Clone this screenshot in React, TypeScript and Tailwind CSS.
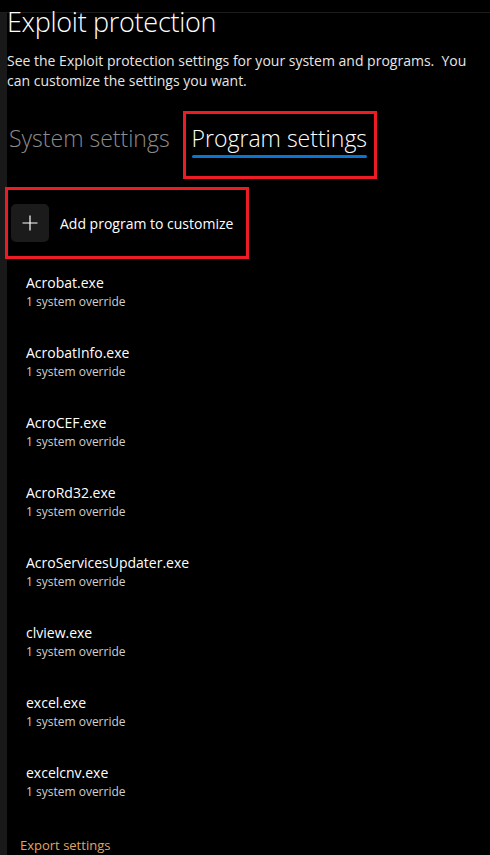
const programs = [
  "Acrobat.exe",
  "AcrobatInfo.exe",
  "AcroCEF.exe",
  "AcroRd32.exe",
  "AcroServicesUpdater.exe",
  "clview.exe",
  "excel.exe",
  "excelcnv.exe",
];

function PlusIcon() {
  return (
    <svg width="16" height="16" viewBox="0 0 16 16" fill="none" stroke="#ffffff" strokeWidth="1.2">
      <path d="M8 0.5v15M0.5 8h15" />
    </svg>
  );
}

export default function App() {
  return (
    <div
      className="h-[855px] w-[490px] overflow-hidden bg-black text-white"
      style={{ fontFamily: '"Segoe UI", "Open Sans", sans-serif' }}
    >
      <div className="h-[12px] bg-black" />
      <div className="flex h-[843px] border-t border-[#1c1c1c]">
        <div className="w-[7px] shrink-0 bg-[#191919]" />
        <div className="flex-1">
          <h1 className="-mt-[9px] text-[27px] leading-[36px] font-light tracking-[-0.3px] text-white">
            Exploit protection
          </h1>
          <p className="mt-[11px] text-[14px] leading-[20px] text-[#e6e6e6]">
            See the Exploit protection settings for your system and programs.&nbsp; You can customize the settings you want.
          </p>

          <div className="mt-[20px] flex items-start">
            <div className="pt-[13px] pl-[2px] text-[23px] leading-[28px] font-light text-[#8c8c8c]">
              System settings
            </div>
            <div className="ml-[13px] flex h-[68px] w-[194px] flex-col border-[3px] border-[#ed1c24] pl-[6px] pt-[10px]">
              <span className="text-[23px] leading-[28px] font-light text-white">Program settings</span>
              <span className="mt-[3px] h-[3px] w-[175px] rounded-full bg-[#0a74d0]" />
            </div>
          </div>

          <div className="-ml-[2px] mt-[8px] flex h-[72px] w-[244px] items-center border-[3px] border-[#ed1c24] pl-[3px]">
            <div className="flex h-[38px] w-[38px] items-center justify-center rounded-[5px] bg-[#1b1b1b]">
              <PlusIcon />
            </div>
            <span className="ml-[11px] text-[14px] text-white">Add program to customize</span>
          </div>

          <ul className="mt-[14px] pl-[19px]">
            {programs.map((name) => (
              <li key={name} className="h-[70px]">
                <div className="text-[14px] leading-[20px] text-white">{name}</div>
                <div className="text-[12px] leading-[18px] text-[#cfcfcf]">1 system override</div>
              </li>
            ))}
          </ul>

          <div className="mt-[3px] pl-[13px] text-[13px] leading-[18px] text-[#e0a464]">Export settings</div>
        </div>
      </div>
    </div>
  );
}
